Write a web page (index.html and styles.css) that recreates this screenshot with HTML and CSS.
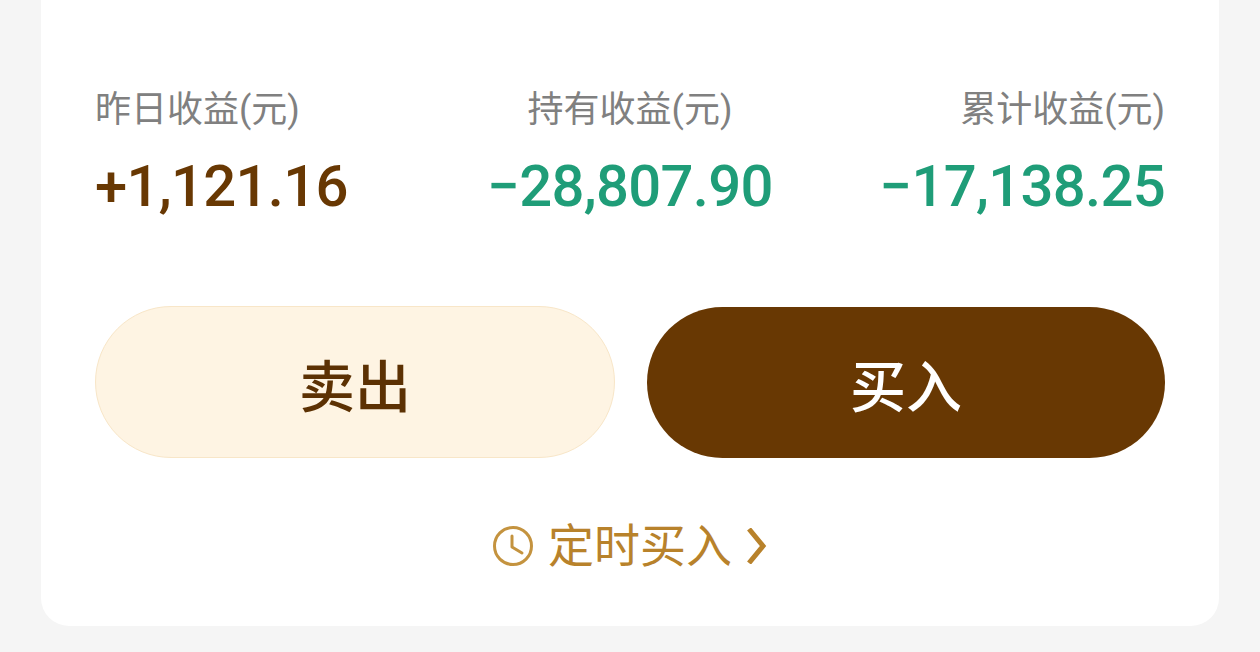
FILE: index.html

```html
<!DOCTYPE html>
<html lang="zh">
<head>
  <meta charset="UTF-8" />
  <title>收益</title>
  <link rel="stylesheet" href="styles.css">
</head>
<body>
  <div class="card">
    <div class="stats">
      <div class="stat">
        <div class="label">昨日收益(元)</div>
        <div class="value gain">+1,121.16</div>
      </div>
      <div class="stat mid">
        <div class="label">持有收益(元)</div>
        <div class="value loss">−28,807.90</div>
      </div>
      <div class="stat last">
        <div class="label">累计收益(元)</div>
        <div class="value loss">−17,138.25</div>
      </div>
    </div>
    <div class="actions">
      <button class="btn sell">卖出</button>
      <button class="btn buy">买入</button>
    </div>
    <div class="timer">
      <svg class="clock" width="40" height="40" viewBox="0 0 40 40" fill="none" stroke="#c4933f" stroke-width="3" stroke-linecap="round" stroke-linejoin="round">
        <circle cx="20" cy="20" r="18.5" />
        <path d="M19 10v11l10 6" />
      </svg>
      <span>定时买入</span>
      <svg class="arrow" width="20" height="36" viewBox="0 0 20 36" fill="none" stroke="#b8822b" stroke-width="5" stroke-linejoin="miter">
        <path d="M2 1l14 17L2 35" />
      </svg>
    </div>
  </div>
</body>
</html>
```

FILE: styles.css

```css
html, body {
  margin: 0;
  height: 652px;
  overflow: hidden;
}
body {
  background-color: #f5f5f5;
  font-family: "Roboto", "Noto Sans CJK SC", sans-serif;
  padding: 0 41px;
  box-sizing: border-box;
}
.card {
  background: #fff;
  height: 626px;
  border-radius: 0 0 28px 28px;
  padding: 87px 54px 0;
  box-sizing: border-box;
}
.stats {
  display: grid;
  grid-template-columns: 1fr 1fr 1fr;
}
.stat {
  display: flex;
  flex-direction: column;
  white-space: nowrap;
}
.mid {
  align-items: center;
}
.last {
  align-items: flex-end;
}
.label {
  font-size: 36px;
  line-height: 46px;
  color: #808080;
}
.value {
  font-size: 58px;
  line-height: 68px;
  margin-top: 19px;
  font-weight: 500;
  letter-spacing: -0.7px;
}
.gain {
  color: #683803;
}
.loss {
  color: #1f9d78;
}
.actions {
  display: flex;
  align-items: flex-end;
  gap: 32px;
  margin-top: 86px;
}
.btn {
  font-family: inherit;
  font-size: 56px;
  font-weight: 500;
  padding: 0;
  box-sizing: border-box;
}
.sell {
  width: 520px;
  height: 152px;
  border-radius: 76px;
  background: #fef4e3;
  border: 1px solid #f8e6c8;
  color: #5c3103;
}
.buy {
  width: 518px;
  height: 151px;
  border-radius: 76px;
  background: #683803;
  border: 0;
  color: #fff;
}
.timer {
  display: flex;
  align-items: center;
  justify-content: center;
  gap: 15px;
  margin-top: 60px;
  font-size: 46px;
  line-height: 56px;
  color: #b8822b;
}
```
